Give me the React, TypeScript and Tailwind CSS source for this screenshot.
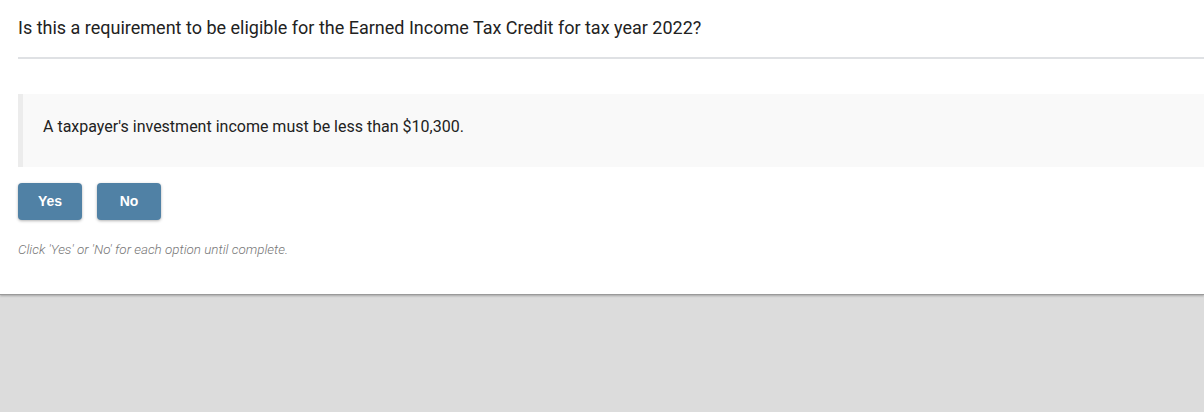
import React from "react";

export default function App() {
  return (
    <div className="w-[1204px] h-[412px] bg-[#dcdcdc] overflow-hidden" style={{ fontFamily: "Roboto, 'Liberation Sans', sans-serif" }}>
      <div className="bg-white h-[295px] border-b border-[#9a9a9a] shadow-[0_1px_2px_rgba(0,0,0,0.25)] overflow-hidden">
        <div className="pl-[18px] pt-[16px]">
          <h1 className="text-[18px] leading-[24px] text-[#222] font-normal">
            Is this a requirement to be eligible for the Earned Income Tax Credit for tax year 2022?
          </h1>
          <div className="mt-[17px] h-[2px] bg-[#dfe1e4]" />
          <div className="mt-[35px] h-[73px] bg-[#f9f9f9] border-l-[5px] border-[#ececec] flex items-center pl-[20px] pb-[7px]">
            <p className="text-[16px] text-[#222]">A taxpayer's investment income must be less than $10,300.</p>
          </div>
          <div className="mt-[16px] flex gap-[15px]">
            <button className="w-[64px] h-[37px] rounded-[4px] bg-[#5081a5] text-white text-[14px] font-bold shadow-[0_1px_3px_rgba(0,0,0,0.3)]" style={{ fontFamily: "'Liberation Sans', Arial, sans-serif" }}>Yes</button>
            <button className="w-[64px] h-[37px] rounded-[4px] bg-[#5081a5] text-white text-[14px] font-bold shadow-[0_1px_3px_rgba(0,0,0,0.3)]" style={{ fontFamily: "'Liberation Sans', Arial, sans-serif" }}>No</button>
          </div>
          <p className="mt-[20px] text-[13.4px] italic font-light text-[#777]">Click 'Yes' or 'No' for each option until complete.</p>
        </div>
      </div>
    </div>
  );
}
